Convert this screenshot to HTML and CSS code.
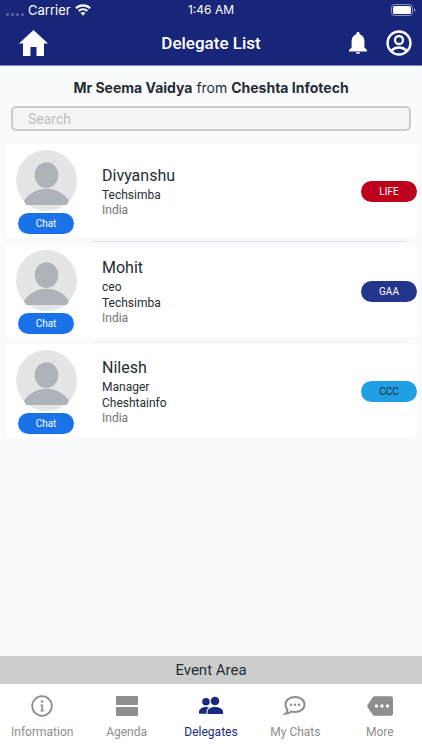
FILE: index.html
```html
<!DOCTYPE html>
<html lang="en">
<head>
<meta charset="utf-8">
<meta name="viewport" content="width=device-width, initial-scale=1">
<title>Delegate List</title>
<link rel="stylesheet" href="styles.css">
</head>
<body>
<svg width="0" height="0" class="defs" aria-hidden="true">
  <symbol id="avatar" viewBox="0 0 62 62">
    <circle cx="31" cy="31" r="31" fill="#e3e5e7"/>
    <ellipse cx="31" cy="25.500" rx="12" ry="13" fill="#adb3b8"/>
    <path d="M8 52C13 44 22 39.500 31 39.500S49 44 54 52L51.500 56H10.500z" fill="#adb3b8"/>
  </symbol>
</svg>
<header class="header">
  <div class="status">
    <div class="status-left">
      <span class="dots"><i></i><i></i><i></i><i></i></span>
      <span>Carrier</span>
      <svg width="16" height="12" viewBox="0 0 16 12" fill="none" stroke="#fff" stroke-width="2.200"><path d="M1 4.200a10 10 0 0 1 14 0M3.700 7a6.200 6.200 0 0 1 8.600 0"/><path d="M8 11.700 5.500 9.100a3.600 3.600 0 0 1 5 0z" fill="#fff" stroke="none"/></svg>
    </div>
    <span>1:46 AM</span>
    <div class="status-right">
      <svg width="25" height="12" viewBox="0 0 25 12"><rect x=".5" y=".5" width="21" height="11" rx="3" fill="none" stroke="#8a91c4"/><rect x="2" y="2" width="18" height="8" rx="1.500" fill="#fff"/><path d="M23 4v4c2-1 2-3 0-4z" fill="#8a91c4"/></svg>
    </div>
  </div>
  <div class="titlebar">
    <button class="icon-button" aria-label="Home"><svg width="29" height="26" viewBox="0 0 29 26" fill="#fff"><path d="M14.500 0 29 13.500h-4V26h-7.500v-9h-6v9H4V13.500H0z"/></svg></button>
    <h1>Delegate List</h1>
    <div class="actions">
      <button class="icon-button" aria-label="Notifications"><svg width="18" height="22" viewBox="0 0 18 22" fill="#fff"><path d="M9 0c-1 0-1.600.7-1.600 1.600v.6C4.300 3 2.600 5.700 2.600 9v6.500L0 18v1.500h18V18l-2.600-2.500V9c0-3.300-1.700-6-4.800-6.800v-.6C10.600.7 10 0 9 0zM6.800 20.200a2.200 1.800 0 0 0 4.400 0z"/></svg></button>
      <button class="icon-button" aria-label="Profile"><svg width="26" height="26" viewBox="0 0 26 26" fill="none" stroke="#fff" stroke-width="2.300"><circle cx="13" cy="13" r="11.500"/><circle cx="13" cy="10" r="4"/><path d="M5.500 20.500c2-2 4.500-3 7.500-3s5.500 1 7.500 3"/></svg></button>
    </div>
  </div>
</header>
<main class="content">
  <p class="welcome"><b>Mr Seema Vaidya</b> from <b>Cheshta Infotech</b></p>
  <input class="search" type="search" placeholder="Search" aria-label="Search">
  <ul class="list">
    <li class="card">
      <div class="person"><svg class="avatar" aria-hidden="true"><use href="#avatar"/></svg><button class="pill">Chat</button></div>
      <div class="info"><h2>Divyanshu</h2><p>Techsimba</p><small>India</small></div>
      <span class="pill life">LIFE</span>
    </li>
    <li class="card">
      <div class="person"><svg class="avatar" aria-hidden="true"><use href="#avatar"/></svg><button class="pill">Chat</button></div>
      <div class="info"><h2>Mohit</h2><p>ceo</p><p>Techsimba</p><small>India</small></div>
      <span class="pill gaa">GAA</span>
    </li>
    <li class="card">
      <div class="person"><svg class="avatar" aria-hidden="true"><use href="#avatar"/></svg><button class="pill">Chat</button></div>
      <div class="info"><h2>Nilesh</h2><p>Manager</p><p>Cheshtainfo</p><small>India</small></div>
      <span class="pill ccc">CCC</span>
    </li>
  </ul>
</main>
<footer>
  <div class="event">Event Area</div>
  <nav class="tabs">
    <a href="#information"><svg width="26" height="22" viewBox="0 0 26 22"><circle cx="13" cy="11" r="9.800" fill="none" stroke="currentColor" stroke-width="1.800"/><circle cx="13" cy="6.600" r="1.300" fill="currentColor"/><path d="M11.300 9.500H14v6h1v1h-3.700v-1h1v-5h-1z" fill="currentColor"/></svg>Information</a>
    <a href="#agenda"><svg width="26" height="22" viewBox="0 0 26 22" fill="currentColor"><rect x="2" y="1" width="22" height="9" rx="1"/><rect x="2" y="12" width="22" height="9" rx="1"/></svg>Agenda</a>
    <a href="#delegates" class="active" aria-current="page"><svg width="26" height="22" viewBox="0 0 26 22" fill="currentColor"><circle cx="8" cy="6.800" r="3.800"/><path d="M1 18.800V17c0-3.500 3.500-5 7-5 1.500 0 3 .2 4 .6l-1 6.200z"/><g stroke="#fff" stroke-width="2" paint-order="stroke"><path d="M9.500 19v-2c0-3.500 3.500-5 7.500-5s8 1.500 8 5v2z"/><circle cx="17" cy="6" r="4.300"/></g></svg>Delegates</a>
    <a href="#chats"><svg width="26" height="22" viewBox="0 0 26 22"><path d="M13 2c5.300 0 9.500 3.100 9.500 7.500S18.300 17 13 17c-1.300 0-2.500-.2-3.700-.6-1.500 1.400-3.400 2.200-5.800 2.400 1.400-1.100 2-2.300 2-4C4.200 13.300 3.500 11.500 3.500 9.500 3.500 5.100 7.700 2 13 2z" fill="none" stroke="currentColor" stroke-width="2"/><g fill="currentColor"><circle cx="9" cy="9.700" r="1.300"/><circle cx="13" cy="9.700" r="1.300"/><circle cx="17" cy="9.700" r="1.300"/></g></svg>My Chats</a>
    <a href="#more"><svg width="26" height="22" viewBox="0 0 26 22"><path d="M7.500 1.200H24q2 0 2 2v15.600q0 2-2 2H7.500q-1 0-1.600-.9L.5 12q-.7-1 0-2l5.400-7.900q.6-.9 1.600-.9z" fill="currentColor"/><g fill="#fff"><circle cx="9.500" cy="11" r="1.700"/><circle cx="15" cy="11" r="1.700"/><circle cx="20.500" cy="11" r="1.700"/></g></svg>More</a>
  </nav>
</footer>
</body>
</html>
```
FILE: styles.css
```css
* { box-sizing: border-box; }
body {
  margin: 0;
  min-height: 100vh;
  display: flex;
  flex-direction: column;
  background: #f9fafc;
  color: #262d33;
  font-family: Roboto, sans-serif;
}
h1, h2, p, ul { margin: 0; padding: 0; font-weight: 400; }
button { border: 0; padding: 0; font-family: inherit; cursor: pointer; }
svg { display: block; }
.defs { position: absolute; }

.header {
  background: #172679;
  color: #fff;
  border-bottom: 1px solid #7f89c0;
}
.status {
  display: grid;
  grid-template-columns: 1fr auto 1fr;
  align-items: center;
  height: 20px;
  padding: 0 6px;
  font: 12px/20px Inter, sans-serif;
}
.status-left { display: flex; align-items: center; gap: 4px; font-size: 13px; }
.status-right { display: flex; justify-content: flex-end; }
.dots { display: flex; gap: 2px; padding-top: 8px; }
.dots i { width: 3px; height: 3px; border-radius: 2px; background: #5e68a5; }
.titlebar {
  display: grid;
  grid-template-columns: 1fr auto 1fr;
  align-items: center;
  height: 45px;
  padding: 0 10px 0 19px;
}
.titlebar h1 { font-size: 17px; font-weight: 500; line-height: 24px; margin-right: 9px; }
.icon-button { background: none; }
.titlebar > .icon-button { justify-self: start; }
.actions { display: flex; justify-content: flex-end; align-items: center; gap: 19px; }

.content { flex: 1; }
.welcome {
  padding: 12px 0 8px;
  text-align: center;
  font: 14px/20px Inter, sans-serif;
}
.welcome b { font-weight: 700; }
.search {
  display: block;
  width: calc(100% - 22px);
  height: 25px;
  margin: 0 11px;
  padding: 0 15px;
  border: 2px solid #cbcbce;
  border-radius: 5px;
  background: #f5f4f4;
  font: 14px/20px Roboto, sans-serif;
  appearance: none;
}
.search::placeholder { color: #bdbdc1; opacity: 1; }
.list {
  list-style: none;
  display: grid;
  gap: 6px;
  padding: 13px 5px 0;
}
.card {
  position: relative;
  display: flex;
  align-items: center;
  min-height: 94px;
  padding-left: 10px;
  border-radius: 5px;
  background: #fff;
}
.card:not(:last-child)::after {
  content: "";
  position: absolute;
  left: 87px;
  right: 10px;
  bottom: -4px;
  height: 1px;
  background: #dcdfe8;
}
.card:nth-child(2)::after { background: #eceef3; }
.person {
  display: flex;
  flex-direction: column;
  align-items: center;
  gap: 2px;
  width: 62px;
  padding-top: 2px;
}
.avatar { width: 61px; height: 61px; }
.info { flex: 1; padding-left: 25px; }
.info h2 { font-size: 16px; line-height: 22px; }
.info p { font-size: 12px; line-height: 16px; }
.info small { display: block; font-size: 12px; line-height: 14px; color: #737373; }
.pill {
  width: 56px;
  height: 21px;
  border-radius: 11px;
  background: #1972e8;
  color: #fff;
  font-size: 10px;
  line-height: 21px;
  text-align: center;
}
.life { background: #bd001c; }
.gaa { background: #24368b; }
.ccc { background: #219fe5; color: #14222e; }

.event {
  background: #cdcdcd;
  text-align: center;
  font-size: 15px;
  line-height: 28px;
}
.tabs {
  display: grid;
  grid-template-columns: repeat(5, 1fr);
  height: 66px;
  padding-top: 11px;
  background: #fff;
}
.tabs a {
  display: flex;
  flex-direction: column;
  align-items: center;
  gap: 6px;
  color: #8e8e8e;
  font-size: 12px;
  line-height: 18px;
  text-decoration: none;
  white-space: nowrap;
}
.tabs .active { color: #1a2a80; }
```
